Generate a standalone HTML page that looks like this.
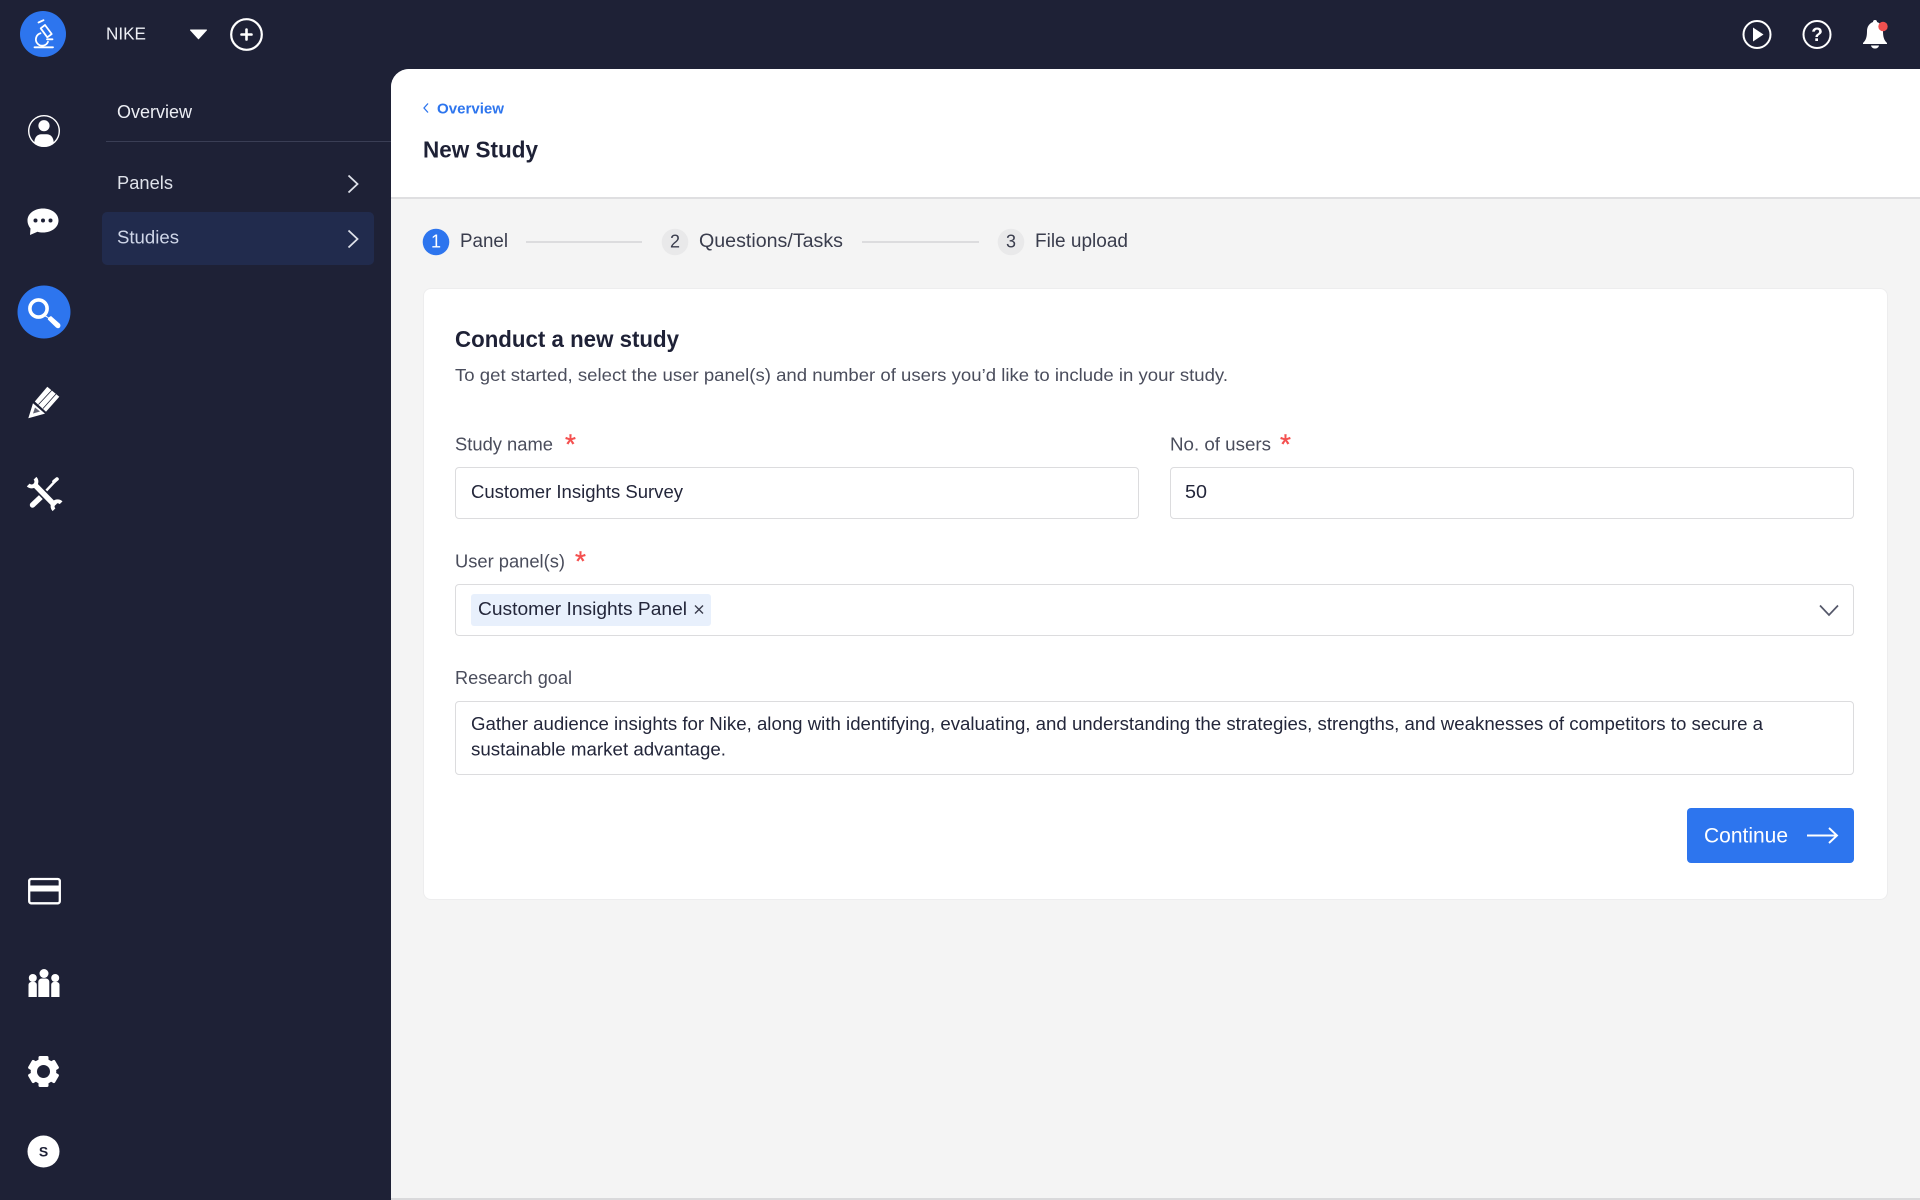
<!DOCTYPE html>
<html lang="en"><head><meta charset="utf-8"><title>New Study</title>
<style>
html,body{margin:0;padding:0;width:1920px;height:1200px;overflow:hidden;background:#1e2136}
div{position:absolute;box-sizing:border-box}
#main{left:391px;top:69px;width:1529px;height:1129px;background:#f4f4f4;border-top-left-radius:18px;overflow:hidden}
#head{left:0;top:0;width:1529px;height:130px;background:#fff;border-bottom:2px solid #dfdfe1}
#bottom{left:391px;top:1198px;width:1529px;height:2px;background:#d9d9db}
#card{left:423px;top:288px;width:1465px;height:612px;background:#fff;border:1px solid #ededee;border-radius:8px}
.f{background:#fff;border:1.5px solid #dcdcde;border-radius:4px}
svg{position:absolute;left:0;top:0}
text{font-family:"Liberation Sans",sans-serif;fill:#23263a;font-size:18px}
</style></head><body>
<div id="main"><div id="head"></div></div><div id="bottom"></div>
<div style="left:102px;top:212px;width:272px;height:53px;background:#212b4d;border-radius:5px"></div>
<div style="left:106px;top:141px;width:285px;height:1px;background:#3a3e55"></div>
<div id="card"></div>
<div class="f" style="left:455px;top:467px;width:684px;height:52px"></div>
<div class="f" style="left:1170px;top:467px;width:684px;height:52px"></div>
<div class="f" style="left:455px;top:584px;width:1399px;height:52px"></div>
<div style="left:471px;top:594px;width:240px;height:32px;background:#e8f0fc;border-radius:3px"></div>
<div class="f" style="left:455px;top:701px;width:1399px;height:74px"></div>
<div style="left:1687px;top:808px;width:167px;height:55px;background:#2d75ee;border-radius:4px"></div>
<svg width="1920" height="1200" viewBox="0 0 1920 1200" xmlns="http://www.w3.org/2000/svg">
<!-- logo -->
<circle cx="43" cy="34" r="23" fill="#2d75ee"/>
<g fill="none" stroke="#fff" stroke-width="1.800" stroke-linecap="round" stroke-linejoin="round">
<path d="M34.500 47.300H53"/><path d="M38.500 22.500l5-2.300"/>
<path d="M40.700 28.300L45 25l6.700 9-4.400 3.300z"/>
<path d="M40.500 33.300a6.300 6.300 0 1 0 7.500 8.500"/><path d="M47 39.300h5.500"/>
</g>
<text x="106" y="39.500" style="font-size:17.500px;fill:#eceef4" textLength="40" lengthAdjust="spacingAndGlyphs">NIKE</text>
<path d="M190.500 30H206.500L198.500 38.800Z" fill="#fff" stroke="#fff" stroke-linejoin="round"/>
<circle cx="246.500" cy="34.500" r="15.300" fill="none" stroke="#fff" stroke-width="2.200"/>
<path d="M246.500 29.500v10M241.500 34.500h10" stroke="#fff" stroke-width="2.600" stroke-linecap="round"/>
<!-- rail -->
<circle cx="44" cy="131" r="15.300" fill="none" stroke="#fff" stroke-width="1.400"/>
<circle cx="44" cy="125.700" r="5.600" fill="#fff"/>
<path d="M34.300 143c0-5.500 3-8.700 7-8.700h5.400c4 0 7 3.200 7 8.700-2.500 2.500-6 4-9.700 4s-7.200-1.500-9.700-4z" fill="#fff"/>
<path d="M43 208.500c8.500 0 15.500 5 15.500 12s-7 12-15.500 12c-2 0-4-.3-5.500-.8L30 235l.5-6.500c-1.800-2.200-3-5-3-8 0-7 7-12 15.500-12z" fill="#fff"/>
<circle cx="35.500" cy="220.500" r="2" fill="#1e2136"/><circle cx="43" cy="220.500" r="2" fill="#1e2136"/><circle cx="50.500" cy="220.500" r="2" fill="#1e2136"/>
<circle cx="44" cy="312" r="26.500" fill="#2d75ee"/>
<circle cx="38.500" cy="308.500" r="8.600" fill="none" stroke="#fff" stroke-width="3.600"/>
<path d="M46 315.500L48.500 317.500 51 316 59.800 323.800C60.800 325 60.600 326.800 59.500 327.700 58.400 328.500 56.800 328.300 55.800 327.300L47.800 319.500 48 318 45 316.500Z" fill="#fff"/>
<!-- pencil -->
<path d="M34.800 401.500L47.300 386.700 59.300 396.700 46 411.800Z" fill="#fff"/>
<path d="M38.500 404.500L52 390M43 408.500L56 394" stroke="#1e2136" stroke-width=".8" fill="none"/>
<path d="M28.300 418.300L33 403.300 45 413.600Z" fill="#fff"/>
<path d="M33 413.500L35 407.500 40 411.500Z" fill="#1e2136" opacity=".7"/>
<!-- tools -->
<path d="M56.800 479.500L43 494" stroke="#fff" stroke-width="2.400" stroke-linecap="round"/>
<path d="M54 481.500l3-2.500" stroke="#fff" stroke-width="3.600" stroke-linecap="round"/>
<path d="M41.500 496.500L32.500 505" stroke="#fff" stroke-width="5.400" stroke-linecap="round"/>
<path d="M36 486L54 504.500" stroke="#1e2136" stroke-width="8.500"/>
<path d="M35 485L55 505.500" stroke="#fff" stroke-width="5.500"/>
<path d="M35 478.200A4.800 4.800 0 1 1 28.200 485" fill="none" stroke="#fff" stroke-width="3.900"/>
<path d="M54 509.800A4.800 4.800 0 1 1 61.100 502.800" fill="none" stroke="#fff" stroke-width="3.900"/>
<!-- lower rail -->
<rect x="29.200" y="879" width="30.600" height="24.300" rx="2" fill="none" stroke="#fff" stroke-width="2.300"/>
<rect x="29" y="885.500" width="31" height="6" fill="#fff"/>
<circle cx="44" cy="973.500" r="4.500" fill="#fff"/><circle cx="32.800" cy="978" r="4" fill="#fff"/><circle cx="55.200" cy="978" r="4" fill="#fff"/>
<path d="M38.300 997V982c0-2 1.500-3.500 3.500-3.500h4c2 0 3.500 1.500 3.500 3.500v15z" fill="#fff"/>
<path d="M28.500 997V985c0-1.800 1.200-3 3-3h2.500c1.800 0 2.800 1.200 2.800 3V997z" fill="#fff"/>
<path d="M51.200 997V985c0-1.800 1-3 2.800-3h2.500c1.800 0 3 1.200 3 3V997z" fill="#fff"/>
<g fill="#fff"><circle cx="43.500" cy="1071.500" r="12.800"/>
<rect x="38.500" y="1056" width="10" height="31" rx="1.500"/>
<rect x="38.500" y="1056" width="10" height="31" rx="1.500" transform="rotate(60 43.500 1071.500)"/>
<rect x="38.500" y="1056" width="10" height="31" rx="1.500" transform="rotate(120 43.500 1071.500)"/></g>
<circle cx="43.500" cy="1071.500" r="6.500" fill="#1e2136"/>
<circle cx="43.500" cy="1151.500" r="16" fill="#fff"/>
<text x="43.500" y="1156.500" text-anchor="middle" style="font-size:14px;font-weight:700;fill:#1e2136">S</text>
<!-- top right -->
<circle cx="1757" cy="34.500" r="13.500" fill="none" stroke="#fff" stroke-width="2"/>
<path d="M1753 27.500l10.500 7-10.500 7z" fill="#fff"/>
<circle cx="1817" cy="34.500" r="13.500" fill="none" stroke="#fff" stroke-width="2"/>
<text x="1817" y="41" text-anchor="middle" style="font-size:19px;font-weight:700;fill:#fff">?</text>
<path d="M1875 20c1.500 0 2 1 2 2 4 1.500 6 5 6 9 0 6 1 9 4 12v1h-24v-1c3-3 4-6 4-12 0-4 2-7.500 6-9 0-1 .5-2 2-2z" fill="#fff"/>
<path d="M1871 45.500h8c-.5 2-2 3-4 3s-3.500-1-4-3z" fill="#fff"/>
<circle cx="1883" cy="26.500" r="4.700" fill="#f0504f"/>
<!-- nav -->
<text x="117" y="118" style="fill:#eceef4" textLength="75" lengthAdjust="spacingAndGlyphs">Overview</text>
<text x="117" y="189" style="fill:#dfe2ea" textLength="56" lengthAdjust="spacingAndGlyphs">Panels</text>
<text x="117" y="243.300" style="fill:#cfd6e8" textLength="62" lengthAdjust="spacingAndGlyphs">Studies</text>
<path d="M348.500 175.500l9 8.500-9 8.500" fill="none" stroke="#dfe2ea" stroke-width="1.800"/>
<path d="M348.500 230.500l9 8.500-9 8.500" fill="none" stroke="#dfe2ea" stroke-width="1.800"/>
<!-- header -->
<path d="M428 103.500l-4 4.500 4 4.500" fill="none" stroke="#2d75ee" stroke-width="1.300"/>
<text x="437" y="113.500" style="font-size:15px;font-weight:700;fill:#2d75ee" textLength="67" lengthAdjust="spacingAndGlyphs">Overview</text>
<text x="423" y="157.500" style="font-size:23.500px;font-weight:700;fill:#1e2136" textLength="115" lengthAdjust="spacingAndGlyphs">New Study</text>
<!-- steps -->
<circle cx="436" cy="242" r="13.300" fill="#2d75ee"/>
<text x="436" y="247.500" text-anchor="middle" style="font-size:18px;fill:#fff">1</text>
<text x="460" y="247" style="font-size:19px;fill:#3a3d4d" textLength="48" lengthAdjust="spacingAndGlyphs">Panel</text>
<rect x="526" y="241" width="116" height="2" fill="#dcdcde"/>
<circle cx="675" cy="242" r="13.300" fill="#e9e9ea"/>
<text x="675" y="247.500" text-anchor="middle" style="font-size:18px;fill:#3a3d4d">2</text>
<text x="699" y="247" style="font-size:19px;fill:#3a3d4d" textLength="144" lengthAdjust="spacingAndGlyphs">Questions/Tasks</text>
<rect x="862" y="241" width="117" height="2" fill="#dcdcde"/>
<circle cx="1011" cy="242" r="13.300" fill="#e9e9ea"/>
<text x="1011" y="247.500" text-anchor="middle" style="font-size:18px;fill:#3a3d4d">3</text>
<text x="1035" y="247" style="font-size:19px;fill:#3a3d4d" textLength="93" lengthAdjust="spacingAndGlyphs">File upload</text>
<!-- card text -->
<text x="455" y="347" style="font-size:23px;font-weight:700;fill:#1e2136" textLength="224" lengthAdjust="spacingAndGlyphs">Conduct a new study</text>
<text x="455" y="381" style="font-size:17.500px;fill:#4a4d5c" textLength="773" lengthAdjust="spacingAndGlyphs">To get started, select the user panel(s) and number of users you’d like to include in your study.</text>
<text x="455" y="450.500" style="fill:#4a4d5c" textLength="98" lengthAdjust="spacingAndGlyphs">Study name</text>
<text x="565" y="453.300" style="font-size:28px;fill:#f4504f;stroke:#f4504f;stroke-width:.4px">*</text>
<text x="1170" y="450.500" style="fill:#4a4d5c" textLength="101" lengthAdjust="spacingAndGlyphs">No. of users</text>
<text x="1280" y="453.300" style="font-size:28px;fill:#f4504f;stroke:#f4504f;stroke-width:.4px">*</text>
<text x="471" y="498" textLength="212" lengthAdjust="spacingAndGlyphs">Customer Insights Survey</text>
<text x="1185" y="498" textLength="22" lengthAdjust="spacingAndGlyphs">50</text>
<text x="455" y="567.500" style="fill:#4a4d5c" textLength="110" lengthAdjust="spacingAndGlyphs">User panel(s)</text>
<text x="575" y="570.400" style="font-size:28px;fill:#f4504f;stroke:#f4504f;stroke-width:.4px">*</text>
<text x="478" y="615" textLength="209" lengthAdjust="spacingAndGlyphs">Customer Insights Panel</text>
<path d="M695 605.500l8 8M703 605.500l-8 8" stroke="#3a3d4d" stroke-width="1.400"/>
<path d="M1820 605.500l9 9.500 9-9.500" fill="none" stroke="#55586a" stroke-width="1.700"/>
<text x="455" y="684" style="fill:#4a4d5c" textLength="117" lengthAdjust="spacingAndGlyphs">Research goal</text>
<text x="471" y="730" textLength="1292" lengthAdjust="spacingAndGlyphs">Gather audience insights for Nike, along with identifying, evaluating, and understanding the strategies, strengths, and weaknesses of competitors to secure a</text>
<text x="471" y="755.500" textLength="255" lengthAdjust="spacingAndGlyphs">sustainable market advantage.</text>
<text x="1704" y="842.500" style="font-size:21px;fill:#fff" textLength="84" lengthAdjust="spacingAndGlyphs">Continue</text>
<path d="M1807 835.500h30M1829 828l8 7.500-8 7.500" fill="none" stroke="#fff" stroke-width="1.900"/>
</svg>
</body></html>
